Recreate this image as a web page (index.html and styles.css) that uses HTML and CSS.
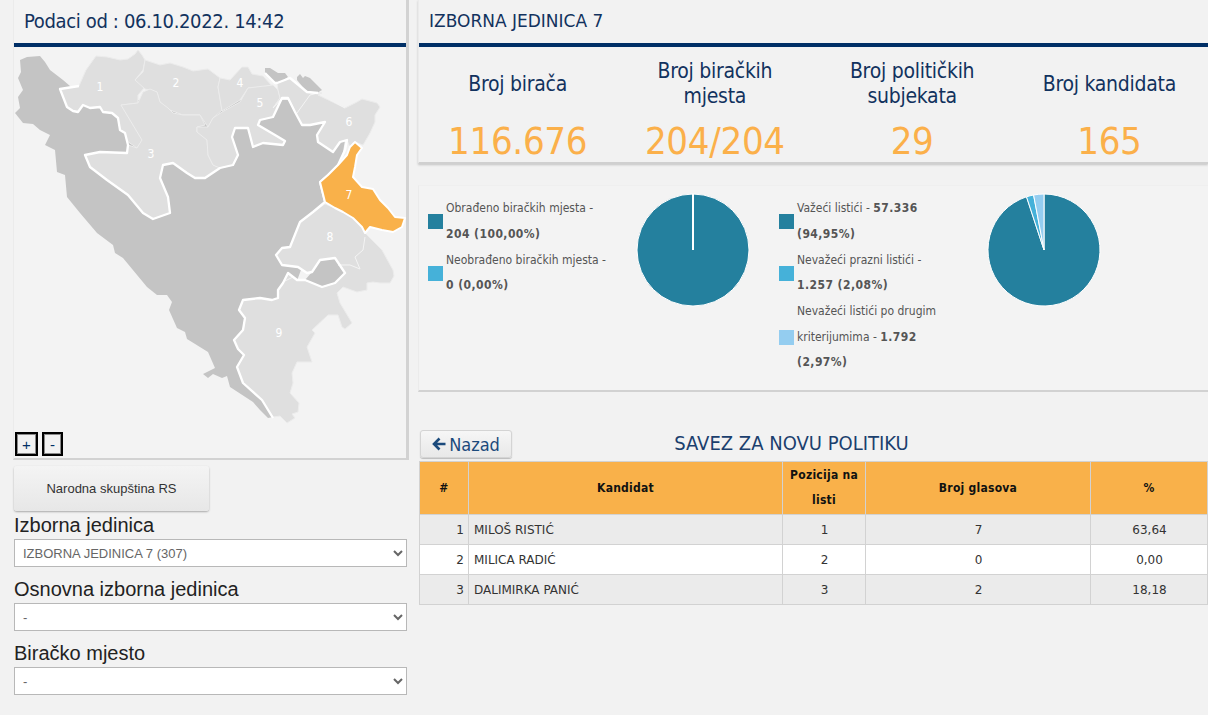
FILE: index.html
```html
<!DOCTYPE html>
<html lang="bs">
<head>
<meta charset="utf-8">
<title>Izborna jedinica 7</title>
<link rel="stylesheet" href="styles.css">
</head>
<body>
<div class="page">
  <aside class="side">
    <section class="map-panel">
      <h1 class="panel-head date-head">Podaci od : 06.10.2022. 14:42</h1>
      <div class="map-wrap">
        <svg class="map" viewBox="14 47 394 410" width="394" height="410">
          <polygon class="r-dark" points="79,86 70,86 63,80 50,70 45,62 40,56 27,57 20,60 21,72 18,78 23,90 18,97 20,108 15,113 23,123 33,124 40,130 50,135 45,145 55,150 57,172 65,175 67,197 80,213 97,233 113,245 115,253 123,258 147,287 157,295 167,295 172,302 169,310 177,328 185,332 187,339 208,352 215,368 203,374 208,378 213,374 222,378 227,376 230,387 253,402 260,410 268,418 273,417 290,300 325,204 340,170 345,140 290,100 120,100"/>
          <polygon class="r-dark" points="265,68 270,68 278,73 285,73 288,77 282,81 275,83 265,73"/>
          <polygon class="r-dark" points="297,77 300,74 303,78 305,76 310,78 317,85 322,90 317,93 307,92 297,80"/>
          <polygon class="r-dark" points="312,272 320,260 335,258 345,273 335,283 322,287 305,280"/>
          <polygon class="r-light" points="60,89 79,86 86,70 96,56 107,57 120,60 128,59 135,54 138,50 142,55 145,60 143,70 135,80 145,87 138,95 138,103 121,105 130,120 142,140 137,148 127,141 125,133 120,130 118,118 112,113 103,112 100,107 90,108 83,105 78,112 73,111 67,107"/>
          <polygon class="r-light" points="145,60 160,65 170,63 183,67 193,71 208,69 220,78 218,87 222,110 213,118 208,127 200,115 183,115 170,110 160,102 157,92 145,89 135,80 143,72"/>
          <polygon class="r-light" points="143,92 150,89 157,92 160,102 168,108 173,113 183,115 200,115 205,125 197,127 197,132 207,140 208,155 213,165 220,168 205,178 195,178 187,173 173,163 163,165 160,178 168,197 170,213 153,219 143,213 128,195 107,180 90,167 85,155 100,152 127,153 128,145 137,148 142,140 121,105 138,103"/>
          <polygon class="r-light" points="220,78 230,80 242,67 248,67 252,74 263,76 273,87 248,88 240,100 222,111 218,87"/>
          <polygon class="r-light" points="248,88 273,85 278,90 280,98 273,108 282,98 273,117 260,120 258,125 275,135 285,141 283,145 263,143 253,147 248,128 235,128 232,137 238,155 233,165 220,168 213,165 208,155 207,140 197,132 197,127 208,127 213,118 222,112 240,102"/>
          <polygon class="r-light" points="277,83 290,78 307,92 322,93 318,95 345,108 357,102 362,99 377,103 380,107 375,115 375,122 370,133 363,145 355,142 350,147 347,140 340,142 333,152 318,142 317,135 325,122 310,125 302,125 295,112 288,98 282,98 273,108 280,98 278,90"/>
          <polygon class="r-light" points="325,204 335,208 343,212 353,218 362,227 365,233 382,250 393,270 394,276 390,283 380,283 373,282 367,283 367,290 357,292 343,287 337,293 340,303 352,323 345,329 342,327 338,315 328,315 312,330 315,333 307,347 312,362 297,362 292,373 293,383 290,393 299,403 298,412 292,414 295,418 287,423 280,416 273,417 262,400 243,383 237,367 244,355 238,349 234,340 243,330 245,318 239,310 243,300 260,298 272,300 278,298 278,290 283,283 288,273 297,280 305,280 322,287 335,283 345,273 335,258 320,260 312,272 307,273 298,267 282,265 276,255 282,248 290,247 300,222 313,212"/>
          <polyline class="line-thin" points="365,237 363,250 355,257 360,269 350,265 338,265"/>
          <polyline class="line-thin" points="285,281 293,277"/>
          <polyline class="line-thin" points="273,108 282,98"/>
          <polyline class="line-thin" points="297,113 310,95 318,93 345,108"/>
          <polyline class="line-thick" points="79,86 60,89 67,107 73,111 78,112 83,105 90,108 100,107 103,112 112,113 118,118 120,130 125,133 127,141 128,145 127,153 100,152 85,155 90,167 107,180 128,195 143,213 153,219 170,213 168,197 160,178 163,165 173,163 187,173 195,178 205,178 220,168 233,165 238,155 232,137 235,128 248,128 253,147 263,143 283,145 285,141 275,135 258,125 260,120 273,117 282,98 288,98 295,112 302,125 310,125 325,122 317,135 318,142 333,152 340,142 347,140 345,150 338,165 328,175 320,182 322,190 325,202 313,212 300,222 290,247 282,248 276,255 282,265 298,267 307,273 312,272 320,260 335,258 345,273 335,283 322,287 305,280 297,280 288,273 283,283 278,290 278,298 272,300 260,298 243,300 239,310 245,318 243,330 234,340 238,349 244,355 237,367 243,383 262,400 273,418"/>
          <polyline class="line-thick" points="265,73 275,83 277,83 290,78 307,92 318,93"/>
          <polygon class="r-active" points="355,142 362,148 357,155 355,167 353,177 362,187 373,189 380,200 388,208 395,217 405,218 402,227 393,232 382,230 370,227 365,233 362,227 353,218 343,212 335,208 325,202 322,190 320,182 328,175 338,165 347,155 350,147"/>
          <text class="map-num" x="100" y="91">1</text>
          <text class="map-num" x="176" y="87">2</text>
          <text class="map-num" x="151" y="158">3</text>
          <text class="map-num" x="240" y="87">4</text>
          <text class="map-num" x="260" y="107">5</text>
          <text class="map-num" x="349" y="126">6</text>
          <text class="map-num" x="349" y="199">7</text>
          <text class="map-num" x="330" y="241">8</text>
          <text class="map-num" x="279" y="337">9</text>
        </svg>
        <div class="zoom-btns">
          <button class="zoom-btn zoom-plus">+</button>
          <button class="zoom-btn zoom-minus">-</button>
        </div>
      </div>
    </section>
    <button class="assembly-btn">Narodna skupština RS</button>
    <label class="field-label">Izborna jedinica</label>
    <select class="field-select"><option>IZBORNA JEDINICA 7 (307)</option></select>
    <label class="field-label">Osnovna izborna jedinica</label>
    <select class="field-select"><option>-</option></select>
    <label class="field-label">Biračko mjesto</label>
    <select class="field-select"><option>-</option></select>
  </aside>

  <main class="content">
    <section class="stats-panel">
      <h2 class="panel-head unit-head">IZBORNA JEDINICA 7</h2>
      <div class="stats">
        <div class="stat"><div class="stat-label">Broj birača</div><div class="stat-value">116.676</div></div>
        <div class="stat"><div class="stat-label">Broj biračkih<br>mjesta</div><div class="stat-value">204/204</div></div>
        <div class="stat"><div class="stat-label">Broj političkih<br>subjekata</div><div class="stat-value">29</div></div>
        <div class="stat"><div class="stat-label">Broj kandidata</div><div class="stat-value">165</div></div>
      </div>
    </section>

    <section class="charts">
      <div class="chart">
        <ul class="legend">
          <li class="legend-item"><span class="swatch swatch-a"></span><span>Obrađeno biračkih mjesta -<br><b>204 (100,00%)</b></span></li>
          <li class="legend-item"><span class="swatch swatch-b"></span><span>Neobrađeno biračkih mjesta -<br><b>0 (0,00%)</b></span></li>
        </ul>
        <svg class="pie" viewBox="-57 -57 114 114" width="114" height="114">
          <circle class="pie-a" r="56"/>
          <line class="pie-cut" x1="0" y1="-56" x2="0" y2="0"/>
        </svg>
      </div>
      <div class="chart">
        <ul class="legend">
          <li class="legend-item"><span class="swatch swatch-a"></span><span>Važeći listići - <b>57.336</b><br><b>(94,95%)</b></span></li>
          <li class="legend-item"><span class="swatch swatch-b"></span><span>Nevažeći prazni listići -<br><b>1.257 (2,08%)</b></span></li>
          <li class="legend-item"><span class="swatch swatch-c"></span><span>Nevažeći listići po drugim<br>kriterijumima - <b>1.792</b><br><b>(2,97%)</b></span></li>
        </ul>
        <svg class="pie" viewBox="-57 -57 114 114" width="114" height="114">
          <path class="pie-a" d="M0 0L0 -56A56 56 0 1 1 -17.5 -53.2Z"/>
          <path class="pie-b" d="M0 0L-17.5 -53.2A56 56 0 0 1 -10.4 -55Z"/>
          <path class="pie-c" d="M0 0L-10.4 -55A56 56 0 0 1 0 -56Z"/>
        </svg>
      </div>
    </section>

    <section class="results">
      <div class="results-head">
        <button class="back-btn"><svg class="back-icon" viewBox="0 0 14 14" width="14" height="14"><path d="M7.5 1.5 2 7 7.5 12.5M2.5 7H13.5"/></svg>Nazad</button>
        <h3 class="party">SAVEZ ZA NOVU POLITIKU</h3>
      </div>
      <table class="table">
        <colgroup><col class="c1"><col class="c2"><col class="c3"><col class="c4"><col class="c5"></colgroup>
        <thead>
          <tr><th>#</th><th>Kandidat</th><th>Pozicija na listi</th><th>Broj glasova</th><th>%</th></tr>
        </thead>
        <tbody>
          <tr><td class="num">1</td><td>MILOŠ RISTIĆ</td><td class="mid">1</td><td class="mid">7</td><td class="mid">63,64</td></tr>
          <tr><td class="num">2</td><td>MILICA RADIĆ</td><td class="mid">2</td><td class="mid">0</td><td class="mid">0,00</td></tr>
          <tr><td class="num">3</td><td>DALIMIRKA PANIĆ</td><td class="mid">3</td><td class="mid">2</td><td class="mid">18,18</td></tr>
        </tbody>
      </table>
    </section>
  </main>
</div>
</body>
</html>
```
FILE: styles.css
```css
* { box-sizing: border-box; }
html, body { margin: 0; padding: 0; }
body {
  background: #f2f2f2;
  font-family: "DejaVu Sans", Verdana, sans-serif;
  font-stretch: condensed;
  overflow: hidden;
  height: 715px;
}
.page {
  display: grid;
  grid-template-columns: 395px 789px;
  column-gap: 10px;
  padding-left: 14px;
}
.panel-head {
  margin: 0;
  height: 47px;
  border-bottom: 4px solid #002f66;
  font-weight: 400;
  color: #12325e;
  display: flex;
  align-items: center;
  padding-bottom: 1px;
}
.date-head { font-size: 20px; letter-spacing: -0.35px; padding-left: 10px; }
.unit-head { font-size: 17px; font-stretch: normal; padding-left: 10px; }

.map-panel {
  background: #f3f3f3;
  border-left: 1px solid #ebebeb;
  border-right: 3px solid #d2d2d2;
  border-bottom: 2px solid #d2d2d2;
  height: 460px;
  margin-left: -1px;
}
.map-wrap { position: relative; height: 411px; }
.map { display: block; }
.r-dark { fill: #c4c4c4; }
.r-light { fill: #dfdfdf; stroke: #ececec; stroke-width: 1; }
.r-active { fill: #f9b14a; stroke: #fff; stroke-width: 2; stroke-linejoin: round; }
.line-thick { fill: none; stroke: #fff; stroke-width: 2.3; stroke-linejoin: round; }
.line-thin { fill: none; stroke: #f4f4f4; stroke-width: 1; }
.map-num {
  fill: #fff;
  font-size: 12px;
  text-anchor: middle;
}
.zoom-btns {
  position: absolute;
  left: 1px;
  bottom: 2px;
  display: flex;
  gap: 4px;
}
.zoom-btn {
  height: 24px;
  padding: 0;
  border: 2px solid #000;
  box-shadow: inset 0 0 0 1px #8a8a8a;
  background: #f2f2f2;
  color: #002f66;
  font: 15px "Liberation Sans", Arial, sans-serif;
}
.zoom-plus { width: 23px; }
.zoom-minus { width: 21px; }

.assembly-btn {
  display: block;
  width: 195px;
  height: 45px;
  margin: 6px 0 0;
  border: 0;
  border-radius: 3px;
  background: linear-gradient(#f4f4f4, #e7e7e7);
  box-shadow: 0 1px 2px #a9a9a9;
  color: #333;
  font: 13px "Liberation Sans", Arial, sans-serif;
  padding: 0 0 1px;
}
.field-label {
  display: block;
  color: #222;
  font: 20px/27px "Liberation Sans", Arial, sans-serif;
  height: 27px;
  margin-top: 0;
}
.field-select {
  display: block;
  width: 393px;
  height: 28px;
  margin: 0 0 9px;
  border: 1px solid #b8b8b8;
  border-radius: 0;
  background-color: #fff;
  color: #666;
  font: 13px "Liberation Sans", Arial, sans-serif;
  padding: 0 4px;
}
.assembly-btn + .field-label { margin-top: 1px; }

.stats-panel {
  margin-left: -1px;
  border-left: 1px solid #ebebeb;
  border-bottom: 2px solid #d0d0d0;
  box-shadow: 0 1px 2px #c4c4c4;
  height: 164px;
}
.stats {
  display: grid;
  grid-template-columns: repeat(4, 1fr);
  padding-top: 12px;
}
.stat { text-align: center; }
.stat-label {
  height: 50px;
  display: flex;
  align-items: center;
  justify-content: center;
  color: #12325e;
  font-size: 21px;
  letter-spacing: -0.26px;
  line-height: 25px;
}
.stat-value {
  margin-top: 12px;
  color: #fbb04a;
  font-size: 38px;
  letter-spacing: -0.3px;
  line-height: 41px;
}

.charts {
  display: grid;
  grid-template-columns: 351px 351px;
  margin-top: 21px;
  margin-left: -1px;
  height: 207px;
  border-top: 1px solid #efefef;
  border-left: 1px solid #ebebeb;
  border-bottom: 2px solid #d2d2d2;
  background: #f3f3f3;
}
.chart {
  display: flex;
  align-items: flex-start;
  padding: 7px 0 0 9px;
}
.legend {
  list-style: none;
  margin: 3px 0 0;
  padding: 0;
  width: 208px;
}
.legend-item {
  display: flex;
  align-items: center;
  gap: 3px;
  color: #555;
  font-size: 12px;
  line-height: 25.5px;
  margin-bottom: 0.5px;
}
.legend-item b { color: #555; letter-spacing: 0.45px; }
.swatch { flex: none; width: 15px; height: 15px; }
.swatch-a { background: #24809e; }
.swatch-b { background: #45b1d9; }
.swatch-c { background: #94cdf0; }
.pie { display: block; flex: none; }
.pie-a { fill: #24809e; stroke: #fff; stroke-width: 1; }
.pie-b { fill: #45b1d9; stroke: #fff; stroke-width: 1; }
.pie-c { fill: #94cdf0; stroke: #fff; stroke-width: 1; }
.pie-cut { stroke: #fff; stroke-width: 2; }

.results { margin-top: 38px; }
.results-head {
  height: 31px;
  display: flex;
  align-items: flex-start;
  padding-left: 1px;
}
.back-btn {
  width: 92px;
  height: 28px;
  padding: 0;
  border: 1px solid #d4d4d4;
  border-radius: 3px;
  background: linear-gradient(#f6f6f6, #e8e8e8);
  box-shadow: 0 1px 1px #bbb;
  color: #1b4a7c;
  font-size: 18px;
  font-family: inherit;
  font-stretch: condensed;
  display: flex;
  align-items: center;
  justify-content: center;
  gap: 3px;
}
.back-icon { fill: none; stroke: #1b4a7c; stroke-width: 2.6; }
.party {
  margin: 0;
  flex: 1;
  padding-right: 137px;
  text-align: center;
  color: #1b3f6e;
  font-size: 20px;
  line-height: 26px;
  font-weight: 400;
}
.table {
  width: 788px;
  table-layout: fixed;
  border-collapse: collapse;
  font-size: 12px;
  color: #333;
}
.c1 { width: 49px; }
.c2 { width: 314px; }
.c3 { width: 83px; }
.c4 { width: 225px; }
.c5 { width: 117px; }
.table th, .table td { border: 1px solid #d2d2d2; }
.table th {
  height: 53px;
  padding: 0 4px;
  background: #f9b14a;
  color: #111;
  font-weight: 700;
  letter-spacing: 0.25px;
  line-height: 25px;
  text-align: center;
}
.table td { height: 30px; padding: 0 4px 0 5px; font-stretch: normal; }
.table tbody tr:nth-child(odd) { background: #ebebeb; }
.table tbody tr:nth-child(even) { background: #fff; }
.table .num { text-align: right; }
.table .mid { text-align: center; }
```
